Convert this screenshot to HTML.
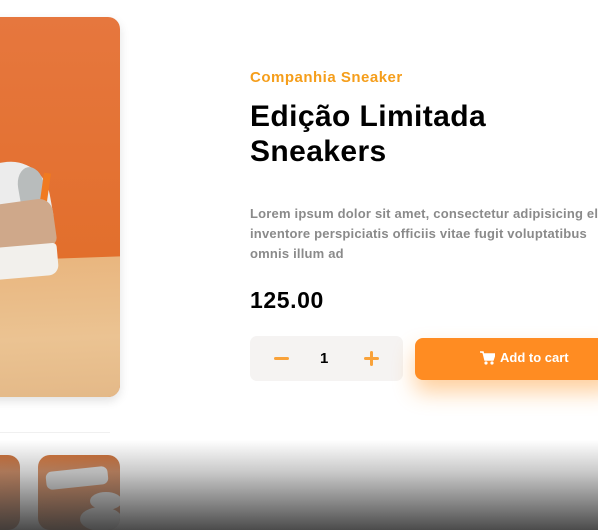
<!DOCTYPE html><html><head><style>
*{margin:0;padding:0;box-sizing:border-box}
html,body{width:598px;height:530px;overflow:hidden}
body{background:#fff;font-family:"Liberation Sans",sans-serif;position:relative}
.main{position:absolute;left:-260px;top:17px;width:380px;height:380px;border-radius:12px;overflow:hidden;box-shadow:0 4px 10px rgba(0,0,0,.12);
background:linear-gradient(180deg,#e6773e 0%,#e06a22 100%)}
.abs{position:absolute}
.t{border-radius:12px;overflow:hidden;background:linear-gradient(160deg,#d0621e,#b8541a 60%,#9a4a20)}
.ov{position:absolute;left:0;right:0;top:440px;bottom:0;background:linear-gradient(to bottom,rgba(255,255,255,0),rgba(150,150,150,.5) 35%,rgba(60,60,60,.92))}
</style></head><body>
<div class="main">
 <div class="abs" style="left:0;top:238px;width:420px;height:200px;background:linear-gradient(180deg,#e9b67f,#ebc392 40%,#ddaf7e);transform:rotate(-2deg);transform-origin:right top"></div>
 <div class="abs" style="left:170px;top:150px;width:140px;height:70px;background:#ececec;border-radius:10px 40px 10px 10px;transform:rotate(-10deg)"></div>
 <div class="abs" style="left:278px;top:150px;width:26px;height:38px;background:#b8bcbc;border-radius:50% 50% 10% 10%;transform:rotate(-10deg)"></div>
 <div class="abs" style="left:302px;top:156px;width:7px;height:28px;background:#f07a20;transform:rotate(8deg)"></div>
 <div class="abs" style="left:170px;top:190px;width:145px;height:48px;background:#cfa88a;border-radius:0 14px 8px 0;transform:rotate(-8deg)"></div>
 <div class="abs" style="left:170px;top:232px;width:148px;height:32px;background:#f2f0ec;border-radius:4px 4px 10px 10px;transform:rotate(-5deg)"></div>
</div>
<div class="abs" style="left:0;top:432px;width:110px;height:1px;background:#f0f0f0"></div>
<div class="abs t" style="left:-60px;top:455px;width:80px;height:75px"></div>
<div class="abs t" style="left:38px;top:455px;width:82px;height:75px">
 <div class="abs" style="left:8px;top:14px;width:62px;height:18px;background:#ddd;border-radius:6px;transform:rotate(-6deg)"></div>
 <div class="abs" style="left:52px;top:37px;width:32px;height:18px;background:#ddd;border-radius:50%"></div>
 <div class="abs" style="left:42px;top:52px;width:42px;height:24px;background:#ddd;border-radius:50%"></div>
</div>
<div class="abs" style="left:250px;top:69px;color:#f59e1b;font-weight:bold;font-size:15px;letter-spacing:.5px">Companhia Sneaker</div>
<div class="abs" style="left:250px;top:99px;color:#000;font-weight:bold;font-size:30px;line-height:35px;letter-spacing:.4px">Edição Limitada<br>Sneakers</div>
<div class="abs" style="left:250px;top:204px;color:#8a8a8a;font-weight:bold;font-size:13px;line-height:20px;white-space:nowrap;letter-spacing:.2px">Lorem ipsum dolor sit amet, consectetur adipisicing elit.<br>inventore perspiciatis officiis vitae fugit voluptatibus<br>omnis illum ad</div>
<div class="abs" style="left:250px;top:287px;color:#000;font-weight:bold;font-size:23px;letter-spacing:.6px">125.00</div>
<div class="abs" style="left:250px;top:336px;width:153px;height:45px;background:#f5f3f2;border-radius:7px"></div>
<div class="abs" style="left:274px;top:357px;width:15px;height:3px;background:#f9a23a;border-radius:2px"></div>
<div class="abs" style="left:320px;top:350px;font-size:15px;font-weight:bold;color:#000">1</div>
<div class="abs" style="left:364px;top:357px;width:15px;height:3px;background:#f9a23a;border-radius:2px"></div>
<div class="abs" style="left:370px;top:351px;width:3px;height:15px;background:#f9a23a;border-radius:2px"></div>
<div class="abs" style="left:415px;top:338px;width:200px;height:42px;background:#ff8c22;border-radius:8px;box-shadow:0 12px 22px rgba(255,150,40,.45)"></div>
<svg class="abs" style="left:480px;top:351px" width="15" height="14" viewBox="0 0 15 14"><path d="M0 1h3l2 8h8l2-6H4" fill="#fff" stroke="#fff" stroke-width="1.5"/><circle cx="6" cy="12" r="1.6" fill="#fff"/><circle cx="12" cy="12" r="1.6" fill="#fff"/></svg>
<div class="abs" style="left:500px;top:350px;color:#fff;font-weight:bold;font-size:13px">Add to cart</div>
<div class="ov"></div>
</body></html>
